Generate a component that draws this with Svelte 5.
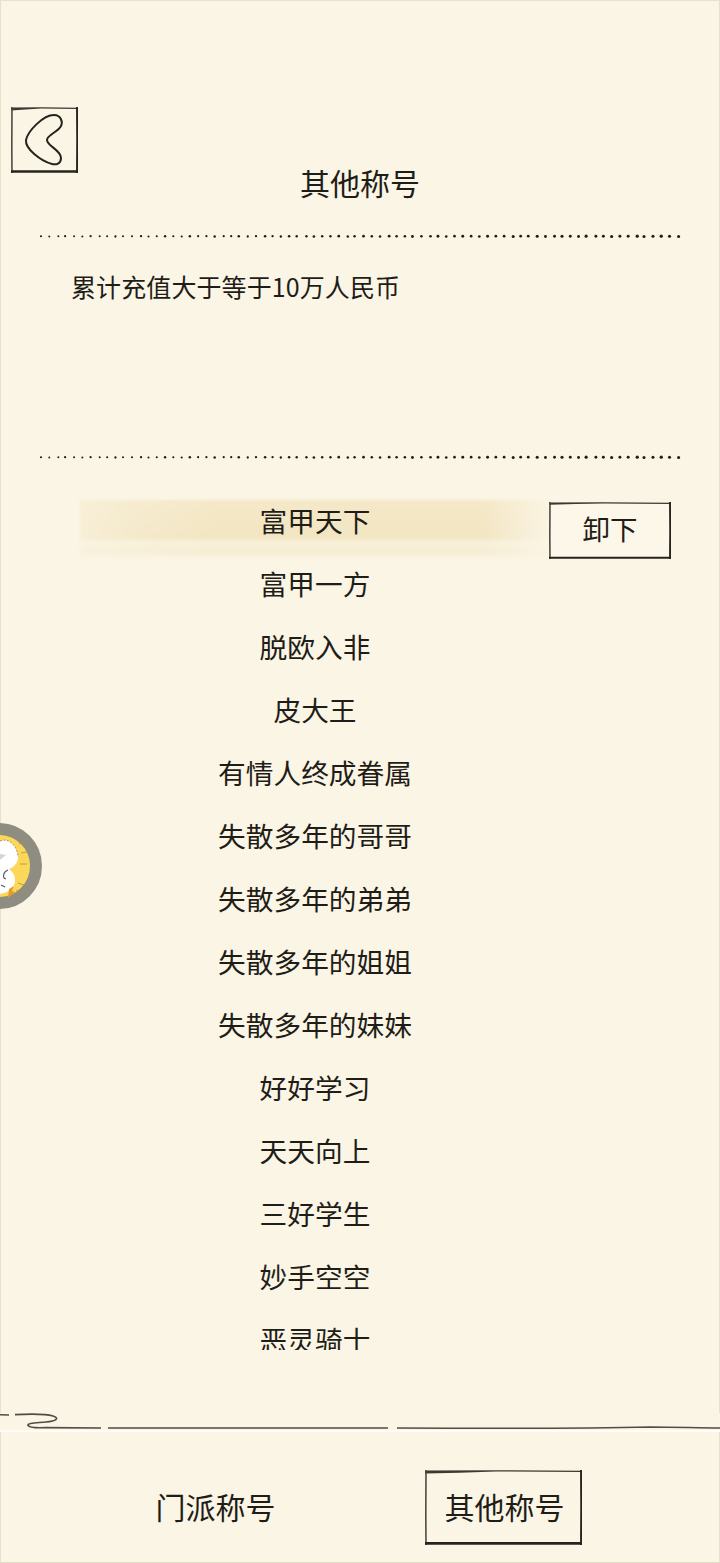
<script>
  const titles = [
    '富甲一方', '脱欧入非', '皮大王', '有情人终成眷属', '失散多年的哥哥', '失散多年的弟弟',
    '失散多年的姐姐', '失散多年的妹妹', '好好学习', '天天向上', '三好学生', '妙手空空', '恶灵骑士'
  ]

  // the dots get a little heavier towards the right, like a dry brush
  const dots = Array.from({ length: 78 }, (_, i) => ({
    x: 1 + i * 8.27 + (i % 5 === 2 ? 0.8 : 0) - (i % 7 === 3 ? 0.7 : 0),
    y: 1.2 + (i % 4 === 1 ? 0.3 : 0),
    r: 0.95 + (i / 78) * 0.6 + (i % 3 === 0 ? 0.12 : 0)
  }))
</script>

{#snippet dotted()}
  <svg class="dotted" width="640" height="4" viewBox="0 0 640 4" aria-hidden="true">
    {#each dots as d}
      <circle cx={d.x} cy={d.y} r={d.r} fill="#1f1d18" />
    {/each}
  </svg>
{/snippet}

{#snippet frame(w, h, heavy)}
  <svg class="frame" width={w} height={h} viewBox="0 0 {w} {h}" aria-hidden="true">
    <path d="M0 0.4 L{w * 0.45} 0.2 L{w} 0.8 L{w} 2 L{w * 0.45} 1.5 L{w * 0.22} {heavy} L0 {heavy + 0.8} Z" fill="#3a3830" />
    <path d="M1 0 L0.8 {h * 0.6} L1 {h}" fill="none" stroke="#4d4b43" stroke-width="1.6" />
    <path d="M{w - 1} 0 L{w - 0.8} {h * 0.5} L{w - 1} {h}" fill="none" stroke="#25231e" stroke-width="1.9" />
    <path d="M0 {h - heavy / 2 - 0.2} L{w} {h - heavy / 2 - 0.2}" fill="none" stroke="#25231e" stroke-width={heavy} />
  </svg>
{/snippet}

<div class="page">
  <header class="head">
    <button class="back" aria-label="返回">
      {@render frame(67, 66, 2.6)}
      <svg class="back-icon" width="67" height="66" viewBox="0 0 67 66" aria-hidden="true">
        <path
          d="M15 33 C17 24 32 8 43 8 C50 8 52 15 50 19 C47 25 36 28 36 33 C36 39 50 43 50 51 C50 57 45 58 41 57 C30 54 14 42 15 33 Z"
          fill="none"
          stroke="#25231e"
          stroke-width="2"
        />
      </svg>
    </button>
    <h1>其他称号</h1>
  </header>

  {@render dotted()}
  <p class="desc">累计充值大于等于10万人民币</p>
  {@render dotted()}

  <div class="list">
    <div class="row current">
      <span class="name">富甲天下</span>
      <button class="unload">
        {@render frame(122, 57, 2)}
        卸下
      </button>
    </div>
    {#each titles as title}
      <div class="row">
        <span class="name">{title}</span>
      </div>
    {/each}
  </div>

  <div class="rule">
    <svg width="720" height="19" viewBox="0 0 720 19" aria-hidden="true">
      <g fill="none" stroke="#4f4d45" stroke-width="1.6">
        <path d="M0 1.8 L9 2" />
        <path d="M15 1.6 C28 1 46 0.8 53 3 C60 5.5 56 8 46 9 C36 10 27 10 28 12.4 C29 14.8 36 15 46 14.6 L101 15" />
        <path d="M108 15 C170 15.2 230 14.4 388 15" />
        <path d="M397 15 C480 15.4 590 15.4 650 14 C680 14.2 700 15 720 15" />
      </g>
    </svg>
  </div>

  <nav class="tabs">
    <button class="tab">门派称号</button>
    <button class="tab active">
      {@render frame(157, 75, 2.8)}
      其他称号
    </button>
  </nav>

  <div class="pet" aria-hidden="true">
    <svg width="43" height="86" viewBox="0 0 43 86">
      <circle cx="-1" cy="43" r="37" fill="#fbd75a" stroke="#8f8d82" stroke-width="12" />
      <g stroke="#b98a3a" stroke-width="0.8" fill="none">
        <path d="M19 21 L25 19" />
        <path d="M21 30 L27 29" />
        <path d="M20 41 L27 41" />
        <path d="M18 60 L27 63" />
        <path d="M16 67 L22 71" />
      </g>
      <path
        d="M0 18 C9 14 18 24 18 34 C18 40 14 44 9 46 C15 50 17 58 13 64 C10 68 5 70 0 71 Z"
        fill="#fff"
      />
      <path d="M0 18 C9 14 18 24 18 34" fill="none" stroke="#9a7a45" stroke-width="0.8" stroke-dasharray="2 1.5" />
      <path d="M0 31 L6 32 L0 37 Z" fill="#d9d5cc" />
      <path d="M8 47 C3 49 2 55 6 56 M1 62 L5 64" fill="none" stroke="#5b5570" stroke-width="1.1" />
      <path d="M9 66 L14 63 L12 68 L15 69 L8 75 Z" fill="#e59a2e" />
    </svg>
  </div>
</div>

<style>
  :global(body) {
    margin: 0;
    background: #fbf5e5;
  }

  .page {
    position: relative;
    width: 720px;
    height: 1563px;
    box-sizing: border-box;
    display: flex;
    flex-direction: column;
    padding-top: 107px;
    overflow: hidden;
    background: #fbf5e5;
    box-shadow: inset 1px 0 0 #e8e1cd, inset -1px 0 0 #e8e1cd, inset 0 1px 0 #e8e1cd, inset 0 -1px 0 #e2dcc8;
    color: #1f1d18;
    font-family: 'Noto Sans CJK SC', 'Noto Sans', sans-serif;
  }

  button {
    font: inherit;
    color: inherit;
    background: none;
    border: 0;
    padding: 0;
  }

  .frame {
    position: absolute;
    left: 0;
    top: 0;
  }

  .head {
    display: grid;
    height: 96px;
    margin-bottom: 32px;
  }

  .back {
    grid-area: 1 / 1;
    position: relative;
    justify-self: start;
    align-self: start;
    width: 67px;
    height: 66px;
    margin-left: 11px;
  }

  .back-icon {
    display: block;
  }

  h1 {
    grid-area: 1 / 1;
    align-self: end;
    margin: 0;
    padding-bottom: 1px;
    text-align: center;
    font-size: 30px;
    font-weight: 400;
    line-height: 40px;
  }

  .dotted {
    display: block;
    flex: none;
    margin-left: 40px;
    overflow: visible;
  }

  .desc {
    height: 217px;
    box-sizing: border-box;
    margin: 0 0 0 71px;
    padding-top: 29px;
    font-size: 25px;
    line-height: 36px;
    letter-spacing: 0.1px;
  }

  .list {
    height: 860px;
    margin-top: 30px;
    flex: none;
    overflow: hidden;
  }

  .row {
    position: relative;
    display: grid;
    grid-template-columns: 470px 122px;
    height: 63px;
    padding-left: 80px;
    font-size: 27.7px;
    line-height: 60px;
  }

  .name {
    position: relative;
    text-align: center;
  }

  .current::before {
    content: '';
    position: absolute;
    left: 80px;
    top: 10px;
    width: 468px;
    height: 60px;
    background:
      linear-gradient(90deg, rgba(251, 245, 229, 0.55), rgba(251, 245, 229, 0.25) 12%, rgba(251, 245, 229, 0) 30%, rgba(251, 245, 229, 0) 86%, rgba(251, 245, 229, 0.9)),
      linear-gradient(180deg, #f4e8c8 0, #f2e5c2 64%, #f8f1da 70%, #f5ecd2 86%, #fbf5e5 100%);
    filter: blur(1.5px);
  }

  .unload {
    position: relative;
    align-self: start;
    width: 122px;
    height: 57px;
    margin: 12px 0 0 -1px;
    padding-bottom: 5px;
    background: #fcf7e9;
    font-size: 27.5px;
    line-height: 40px;
    text-align: center;
  }

  .rule {
    flex: none;
    height: 19px;
    margin-top: 63px;
    background: linear-gradient(#fbf5e5 17px, #fffdf6 17px);
  }

  .rule svg {
    display: block;
  }

  .tabs {
    display: grid;
    grid-template-columns: 157px 157px;
    column-gap: 132px;
    margin: 38px 0 0 136px;
    font-size: 30px;
    line-height: 40px;
  }

  .tab {
    position: relative;
    height: 75px;
    padding-bottom: 4px;
    text-align: center;
    white-space: nowrap;
    text-indent: 2px;
  }

  .pet {
    position: absolute;
    left: 0;
    top: 823px;
    line-height: 0;
  }
</style>
